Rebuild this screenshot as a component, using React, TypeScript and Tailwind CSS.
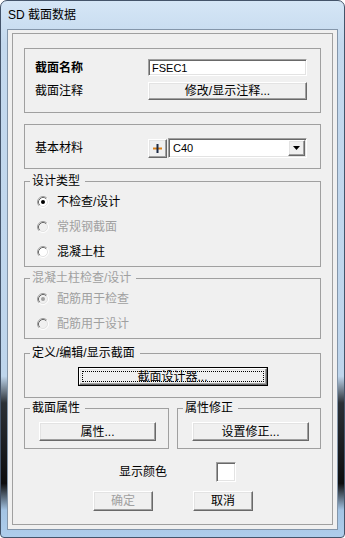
import React from 'react'

const raised =
  'border border-t-white border-l-white border-r-[#696969] border-b-[#696969] shadow-[inset_-1px_-1px_0_#a0a0a0,inset_1px_1px_0_#e3e3e3] bg-[#f0f0f0]'
const sunken =
  'border border-t-[#a0a0a0] border-l-[#a0a0a0] border-r-white border-b-white shadow-[inset_1px_1px_0_#696969,inset_-1px_-1px_0_#e3e3e3]'

function Radio({ checked, disabled }: { checked?: boolean; disabled?: boolean }) {
  return (
    <svg width="12" height="12" viewBox="0 0 12 12" className="shrink-0">
      <circle cx="6" cy="6" r="5" fill={disabled ? '#f0f0f0' : '#ffffff'} />
      <path d="M2.11 9.89A5.5 5.5 0 0 1 9.89 2.11" fill="none" stroke="#a0a0a0" />
      <path d="M9.89 2.11A5.5 5.5 0 0 1 2.11 9.89" fill="none" stroke="#ffffff" />
      <path d="M2.82 9.18A4.5 4.5 0 0 1 9.18 2.82" fill="none" stroke="#696969" />
      <path d="M9.18 2.82A4.5 4.5 0 0 1 2.82 9.18" fill="none" stroke="#e3e3e3" />
      {checked && <circle cx="6" cy="6" r="2" fill={disabled ? '#a0a0a0' : '#000000'} />}
    </svg>
  )
}

function RadioRow({ label, checked, disabled }: { label: string; checked?: boolean; disabled?: boolean }) {
  return (
    <div className={`flex items-center h-[25px] pl-[12px] gap-[8px] ${disabled ? 'text-[#a0a0a0]' : 'text-black'}`}>
      <Radio checked={checked} disabled={disabled} />
      <span>{label}</span>
    </div>
  )
}

function Btn({ children, className = '', disabled }: { children: React.ReactNode; className?: string; disabled?: boolean }) {
  return (
    <div className={`${raised} flex items-center justify-center ${disabled ? 'text-[#a0a0a0]' : 'text-black'} ${className}`}>
      {children}
    </div>
  )
}

export default function App() {
  return (
    <div className="w-[345px] h-[538px] flex flex-col border border-[#44546a] rounded-t-[7px] rounded-b-[4px] overflow-hidden bg-[linear-gradient(180deg,#d5e6f6_0%,#c4d9ee_8%,#bed5ec_70%,#2b3036_75%,#0d0d0e_90%,#a4c4e4_95%,#aecdeb_100%)] px-[6px] pb-[7px] text-[12px] leading-[14px] font-['Liberation_Sans','Noto_Sans_CJK_SC',sans-serif] text-black">
      <div className="h-[28px] flex items-center pl-[1px] text-[12px]">SD 截面数据</div>

      <div className="flex-1 flex flex-col bg-[#f0f0f0] border border-[#8496aa] px-[4px] pt-[3px] pb-[4px]">
        <div className="flex-1 flex flex-col border border-[#a0a0a0] pt-[14px] px-[11px] pb-[13px]">
          {/* name / notes */}
          <div className="border border-[#a0a0a0] pt-[10px] pb-[12px] pl-[10px] pr-[13px]">
            <div className="flex items-center h-[17px]">
              <span className="w-[113px] font-bold">截面名称</span>
              <div className={`${sunken} bg-white w-[159px] h-[17px] flex items-center pl-[3px] text-[11px]`}>FSEC1</div>
            </div>
            <div className="flex items-center h-[18px] mt-[6px]">
              <span className="w-[113px]">截面注释</span>
              <Btn className="w-[159px] h-[18px]">修改/显示注释...</Btn>
            </div>
          </div>

          {/* material */}
          <div className="mt-[11px] border border-[#a0a0a0] pt-[13px] pb-[10px] pl-[10px] pr-[13px]">
            <div className="flex items-center h-[20px]">
              <span className="w-[113px]">基本材料</span>
              <Btn className="w-[19px] h-[19px]">
                <svg width="9" height="9" viewBox="0 0 9 9">
                  <rect x="0" y="3.5" width="9" height="2" fill="#d9801a" />
                  <rect x="3.5" y="0" width="2" height="9" fill="#1c2a44" />
                </svg>
              </Btn>
              <div className={`${sunken} bg-white w-[139px] h-[20px] ml-[1px] flex items-center justify-between pl-[4px] pr-[1px]`}>
                <span className="text-[11px]">C40</span>
                <Btn className="w-[17px] h-[16px]">
                  <svg width="7" height="4" viewBox="0 0 7 4">
                    <polygon points="0,0 7,0 3.5,4" fill="#000" />
                  </svg>
                </Btn>
              </div>
            </div>
          </div>

          {/* design type */}
          <fieldset className="mt-[5px] border border-[#a0a0a0] pt-[1px] pb-[2px]">
            <legend className="ml-[5px] pl-[2px] pr-[5px] leading-[14px]">设计类型</legend>
            <RadioRow label="不检查/设计" checked />
            <RadioRow label="常规钢截面" disabled />
            <RadioRow label="混凝土柱" />
          </fieldset>

          {/* concrete column */}
          <fieldset className="mt-[4px] border border-[#a0a0a0] pt-[1px] pb-[2px]">
            <legend className="ml-[5px] pl-[2px] pr-[5px] leading-[14px] text-[#a0a0a0]">混凝土柱检查/设计</legend>
            <RadioRow label="配筋用于检查" checked disabled />
            <RadioRow label="配筋用于设计" disabled />
          </fieldset>

          {/* section designer */}
          <fieldset className="mt-[7px] border border-[#a0a0a0] pt-[7px] pb-[11px]">
            <legend className="ml-[5px] pl-[2px] pr-[5px] leading-[14px]">定义/编辑/显示截面</legend>
            <div className="mx-auto w-[190px] h-[19px] border border-black flex">
              <div className={`${raised} flex-1 flex p-[2px]`}>
                <div className="flex-1 border border-dotted border-black flex items-center justify-center">截面设计器...</div>
              </div>
            </div>
          </fieldset>

          {/* properties */}
          <div className="mt-[3px] flex gap-[8px]">
            <fieldset className="w-[145px] border border-[#a0a0a0] pt-[7px] pb-[7px]">
              <legend className="ml-[5px] pl-[2px] pr-[5px] leading-[14px]">截面属性</legend>
              <Btn className="ml-[14px] w-[117px] h-[19px]">属性...</Btn>
            </fieldset>
            <fieldset className="flex-1 border border-[#a0a0a0] pt-[7px] pb-[7px]">
              <legend className="ml-[5px] pl-[2px] pr-[5px] leading-[14px]">属性修正</legend>
              <Btn className="ml-[14px] w-[117px] h-[19px]">设置修正...</Btn>
            </fieldset>
          </div>

          {/* colour */}
          <div className="mt-[13px] h-[20px] flex items-center pl-[95px]">
            <span className="w-[97px]">显示颜色</span>
            <div className={`${sunken} bg-white w-[20px] h-[20px]`} />
          </div>

          {/* ok / cancel */}
          <div className="mt-[9px] h-[20px] flex gap-[40px] pl-[69px]">
            <Btn className="w-[60px] h-[20px]" disabled>确定</Btn>
            <Btn className="w-[60px] h-[20px]">取消</Btn>
          </div>
        </div>
      </div>
    </div>
  )
}
